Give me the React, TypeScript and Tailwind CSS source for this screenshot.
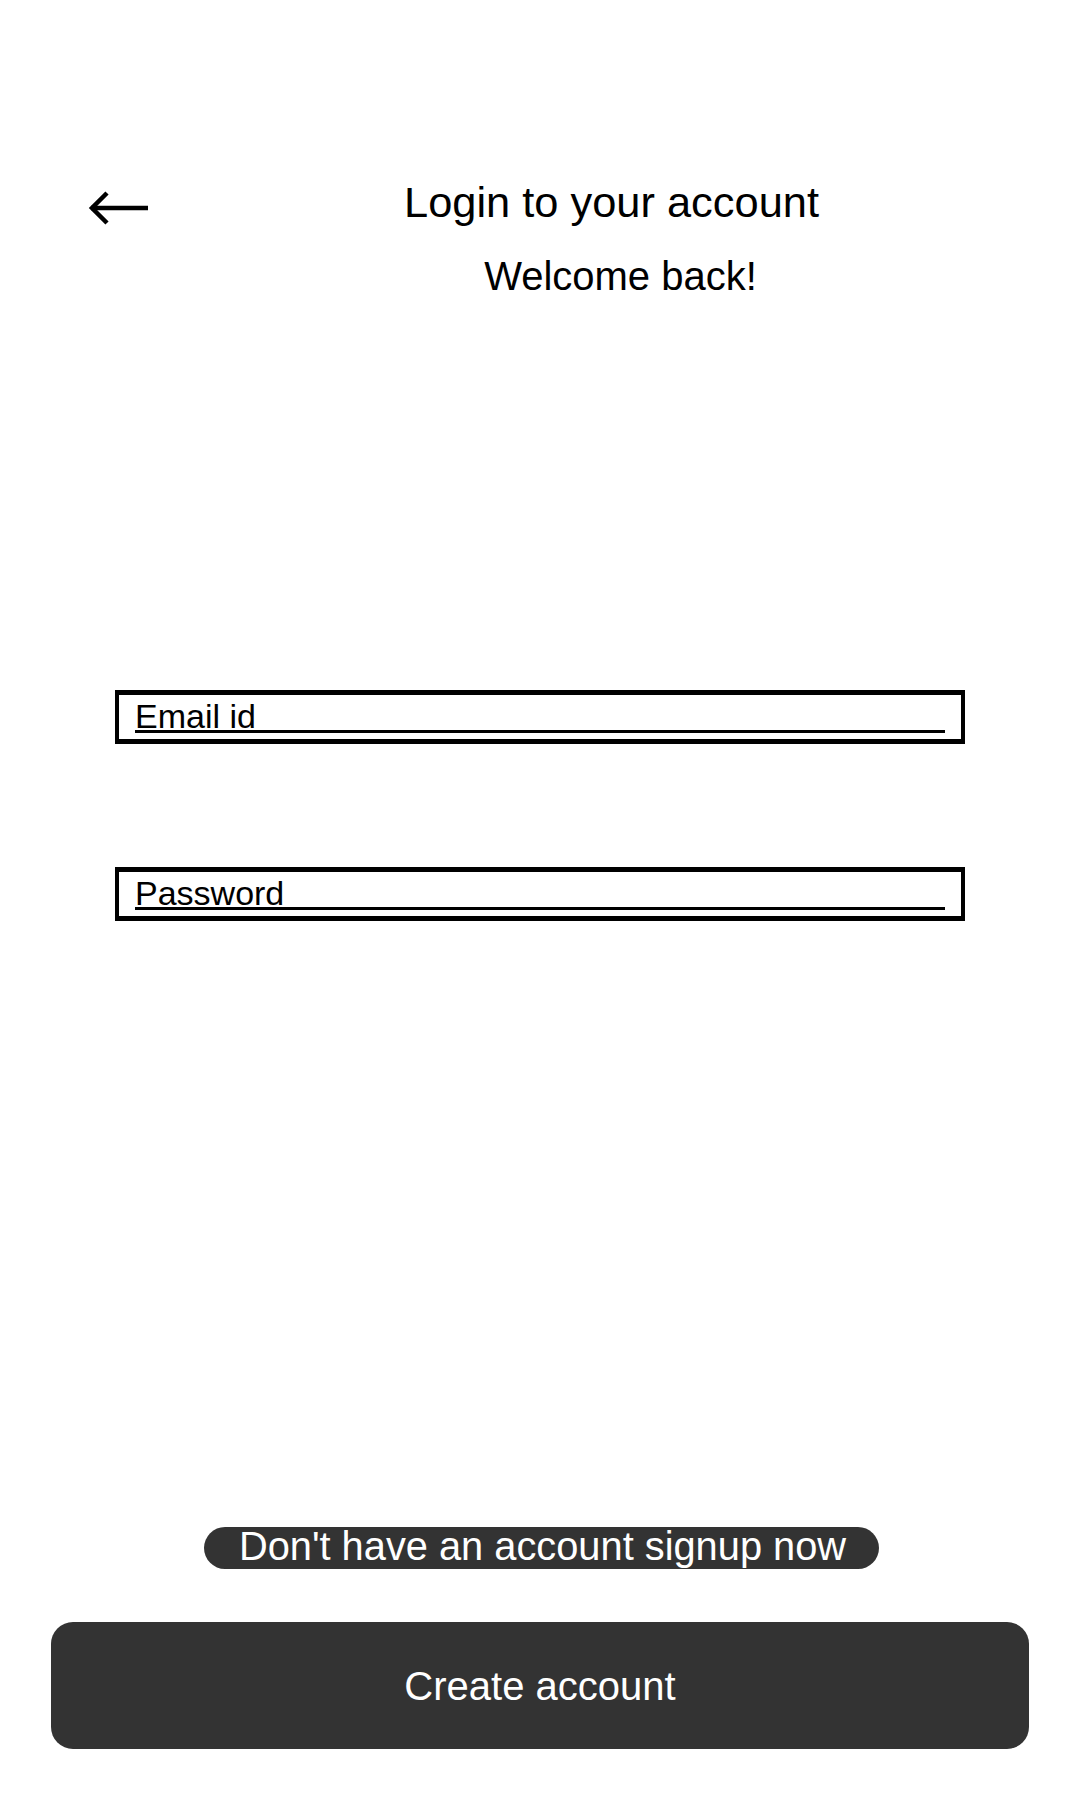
import React from 'react';

function BackArrow() {
  return (
    <svg width="62" height="34" viewBox="0 0 62 34" fill="none" stroke="currentColor" strokeWidth="4.5">
      <path d="M3 17 H60" />
      <path d="M19 2 L4 17 L19 32" />
    </svg>
  );
}

function Field({ label, type }: { label: string; type: string }) {
  return (
    <div className="mx-[115px] h-[54px] border-x-4 border-y-[5px] border-black px-4 pt-[7px] pb-[6px]">
      <input
        type={type}
        placeholder={label}
        className="block w-full h-[31px] border-b-[3px] border-black bg-transparent p-0 text-[34px] leading-[28px] text-black placeholder:text-black outline-none"
      />
    </div>
  );
}

export default function App() {
  return (
    <div
      className="w-[1080px] h-[1800px] bg-white text-black flex flex-col"
      style={{ fontFamily: '"Liberation Sans", Arial, sans-serif' }}
    >
      {/* header */}
      <div className="flex items-start pt-[181px]">
        <button className="ml-[88px] mt-[10px] text-black">
          <BackArrow />
        </button>
        <div className="flex-1 flex flex-col items-center">
          <h1 className="pr-[7px] text-[43.4px] leading-none font-normal">Login to your account</h1>
          <p className="mt-[32px] pl-[11px] text-[40px] leading-none">Welcome back!</p>
        </div>
      </div>

      <form className="mt-[394px] flex flex-col gap-[123px]">
        <Field label="Email id" type="email" />
        <Field label="Password" type="password" />
      </form>

      <div className="mt-auto flex flex-col items-center pb-[51px]">
        <a className="ml-[3px] h-[42px] rounded-full bg-[#333333] pl-[35px] pr-[33px] pb-[4px] text-[39.8px] leading-[38px] text-white">
          Don't have an account signup now
        </a>
        <button className="mt-[53px] w-[978px] h-[127px] rounded-[22px] bg-[#333333] text-[40px] text-white">
          Create account
        </button>
      </div>
    </div>
  );
}
